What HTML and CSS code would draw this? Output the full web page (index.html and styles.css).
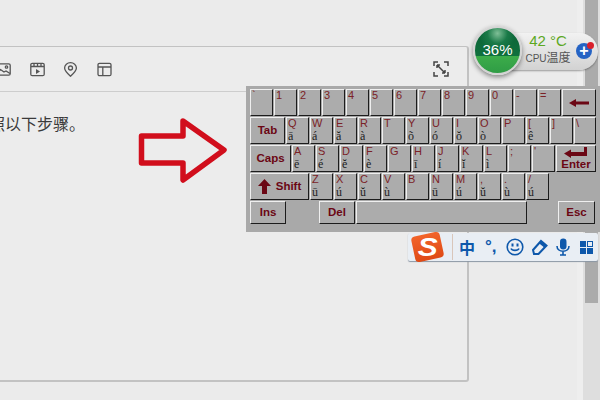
FILE: index.html
```html
<!DOCTYPE html>
<html>
<head>
    <title>Keyboard</title>
    <link rel="stylesheet" href="styles.css">
</head>
<body>
    <div class="main">
        <div class="card">
            <div class="toolbar">
                <div class="tools">
                    <svg class="icon" viewBox="0 0 15 15"><rect x="0.8" y="1.8" width="13.4" height="11.4" rx="1.5"/><circle cx="10.5" cy="5" r="1.2"/><path d="M1 10.5l3.5-3 3.5 2.5 2-1 4 2.5"/></svg>
                    <svg class="icon" viewBox="0 0 15 15"><rect x="0.8" y="1.3" width="13.4" height="12.4" rx="1.5"/><path d="M1 4.5h13M4 1.5v3M7.5 1.5v3M11 1.5v3"/><path class="solid" d="M6 7l4 2.5-4 2.5z"/></svg>
                    <svg class="icon" viewBox="0 0 15 15"><path d="M7.5 14.2C4 11 1.6 8.500 1.600 5.900a5.900 5.200 0 0 1 11.800 0c0 2.600-2.400 5.100-5.900 8.300z"/><circle cx="7.500" cy="6" r="2"/></svg>
                    <svg class="icon" viewBox="0 0 15 15"><rect x="1" y="1.300" width="13" height="12.400" rx="1.500"/><path d="M1 5h13M5.800 5v8.500"/></svg>
                </div>
                <svg class="icon expand" viewBox="0 0 16 16"><path d="M1 5V1h4M11 1h4v4M15 11v4h-4M5 15H1v-4"/><path d="M4 4l8 8M4 4h3M4 4v3M12 12H9M12 12V9"/></svg>
            </div>
            <p class="content">照以下步骤。</p>
        </div>
    </div>
    <div class="scrollbar"><div class="thumb"></div></div>

    <svg class="arrow" viewBox="0 0 100 72" width="100" height="72"><path d="M3.500 19H45V4l41 29-41 30V46H3.500z"/></svg>

    <div class="widget">
        <div class="gauge"><span>36%</span></div>
        <div class="pill">
            <div class="readout">
                <div class="temp">42 °C</div>
                <div class="label"><span class="cpu">CPU</span>温度</div>
            </div>
            <div class="plus">+<i class="dot"></i></div>
        </div>
    </div>

    <div class="keyboard">
        <div class="row">
            <div class="key">`</div><div class="key">1</div><div class="key">2</div><div class="key">3</div><div class="key">4</div><div class="key">5</div><div class="key">6</div><div class="key">7</div><div class="key">8</div><div class="key">9</div><div class="key">0</div><div class="key">-</div><div class="key">=</div>
            <div class="key fn back"><svg width="20" height="8" viewBox="0 0 20 8"><path d="M0 4l7-4v2.500h13v3H7V8z"/></svg></div>
        </div>
        <div class="row">
            <div class="key fn tab">Tab</div>
            <div class="key">Q<b>ā</b></div><div class="key">W<b>á</b></div><div class="key">E<b>ă</b></div><div class="key">R<b>à</b></div><div class="key">T</div><div class="key">Y<b>õ</b></div><div class="key">U<b>ó</b></div><div class="key">I<b>ŏ</b></div><div class="key">O<b>ò</b></div><div class="key">P</div><div class="key">[<b>ê</b></div><div class="key">]</div><div class="key last">\</div>
        </div>
        <div class="row">
            <div class="key fn caps">Caps</div>
            <div class="key">A<b>ē</b></div><div class="key">S<b>é</b></div><div class="key">D<b>ĕ</b></div><div class="key">F<b>è</b></div><div class="key">G</div><div class="key">H<b>ī</b></div><div class="key">J<b>í</b></div><div class="key">K<b>ĭ</b></div><div class="key">L<b>ì</b></div><div class="key">;</div><div class="key">'</div>
            <div class="key fn enter"><svg width="24" height="11" viewBox="0 0 24 11"><path d="M0 6.500l7-4V5h13V0h3v9H7v2z"/></svg>Enter</div>
        </div>
        <div class="row">
            <div class="key fn shift"><svg width="13" height="15" viewBox="0 0 13 15"><path d="M6.500 0L13 7H9v8H4V7H0z"/></svg>Shift</div>
            <div class="key">Z<b>ū</b></div><div class="key">X<b>ú</b></div><div class="key">C<b>ŭ</b></div><div class="key">V<b>ù</b></div><div class="key">B</div><div class="key">N<b>ū</b></div><div class="key">M<b>ú</b></div><div class="key">,<b>ŭ</b></div><div class="key">.<b>ù</b></div><div class="key">/<b>ú</b></div>
        </div>
        <div class="row bottom">
            <div class="key fn ins">Ins</div>
            <div class="key fn del">Del</div>
            <div class="key space"></div>
            <div class="key fn esc">Esc</div>
        </div>
    </div>

    <div class="imebar">
        <div class="logo"><span>S</span></div>
        <div class="sep"></div>
        <span class="zh">中</span>
        <span class="punct">°,</span>
        <svg class="ime" width="18" height="18" viewBox="0 0 18 18"><circle cx="9" cy="9" r="7.800"/><path d="M5 10.500c1 2.500 7 2.500 8 0"/><path class="fill" d="M5.500 5.500h2v3h-2zM10.500 5.500h2v3h-2z"/></svg>
        <svg class="ime pen" width="16" height="16" viewBox="0 0 16 16"><path d="M1 11l8-9 5.500 4.500-8 8.500H2z"/><path class="fill" d="M7 4.200L9 2l5.500 4.500-2 2.200z"/></svg>
        <svg class="ime mic" width="14" height="18" viewBox="0 0 14 18"><rect class="fill" x="4" y="0.500" width="6.500" height="11" rx="3.200"/><path d="M1 8c0 7 12 7 12 0M7 14v3M4 17h6"/></svg>
        <div class="grid"><i></i><i class="open"></i><i></i><i></i></div>
    </div>
</body>
</html>
```

FILE: styles.css
```css
html, body {
    height: 400px;
    overflow: hidden;
}

body {
    display: flex;
    margin: 0;
    position: relative;
    background: #ebebeb;
    font-family: "Liberation Sans", "Noto Sans CJK SC", sans-serif;
}

.main {
    flex: 1;
}

.card {
    box-sizing: border-box;
    width: 489px;
    height: 336px;
    margin: 46px 0 0 -20px;
    border: 1px solid #c2c2c2;
    border-width: 1px 2px 2px 1px;
    border-radius: 3px;
    background: #ececec;
}

.toolbar {
    display: flex;
    justify-content: space-between;
    align-items: center;
    height: 45px;
    padding: 0 18px 0 15px;
    box-sizing: border-box;
    border-bottom: 1px solid #cdcdcd;
}

.tools {
    display: flex;
    gap: 18.500px;
}

.icon {
    width: 15px;
    height: 15px;
    fill: none;
    stroke: #555;
    stroke-width: 1.3;
}

.icon .solid {
    fill: #555;
    stroke: none;
}

.expand {
    width: 16px;
    height: 16px;
    stroke: #444;
    stroke-width: 1.5;
}

.content {
    margin: 0;
    padding: 24px 8px 0;
    font-size: 16px;
    line-height: 18px;
    color: #3a3a3a;
}

.scrollbar {
    width: 17px;
    height: 400px;
    background: #dedede;
    box-shadow: -6px 0 0 #eeeeee;
}

.thumb {
    width: 13px;
    height: 303px;
    margin-left: 2px;
    background: #ababab;
}

/* red arrow pasted over the page */
.arrow {
    position: absolute;
    left: 138px;
    top: 117px;
}

.arrow path {
    fill: none;
    stroke: #d10e1c;
    stroke-width: 5.500;
    stroke-linejoin: round;
}

/* cpu widget */
.widget {
    position: absolute;
    left: 473px;
    top: 26px;
    display: flex;
    align-items: center;
}

.gauge {
    position: relative;
    z-index: 1;
    box-sizing: border-box;
    width: 49px;
    height: 49px;
    padding-bottom: 2px;
    border: 2px solid #d4d4d4;
    border-radius: 50%;
    display: flex;
    align-items: center;
    justify-content: center;
    background: radial-gradient(circle at 50% 12%, #7fbf97 0, #1a7a48 22%, transparent 40%),
        linear-gradient(#0c6236 0, #10703e 63%, #3cac4a 63%, #2f9c45 100%);
    box-shadow: 0 2px 5px rgba(0, 0, 0, 0.45);
    color: #fff;
    font-size: 15px;
}

.pill {
    box-sizing: border-box;
    display: flex;
    align-items: center;
    width: 101px;
    height: 37px;
    margin: 1px 0 0 -25px;
    padding-left: 25px;
    border-radius: 0 19px 19px 0;
    background: linear-gradient(#f2f2f2, #d2d2d2);
    box-shadow: 0 1px 2px rgba(0, 0, 0, 0.35);
}

.readout {
    width: 52px;
    margin-top: -3px;
    text-align: center;
}

.temp {
    font-size: 15px;
    line-height: 18px;
    color: #5ca81f;
}

.label {
    font-size: 12px;
    line-height: 17px;
    color: #555;
    white-space: nowrap;
}

.cpu {
    font-size: 10px;
}

.plus {
    position: relative;
    width: 16px;
    height: 16px;
    margin-left: 2px;
    border-radius: 50%;
    background: #2563c4;
    color: #fff;
    font-size: 16px;
    font-weight: bold;
    line-height: 16px;
    text-align: center;
}

.dot {
    position: absolute;
    right: -2px;
    top: -1px;
    width: 7px;
    height: 7px;
    border-radius: 50%;
    background: #d8202c;
}

/* on-screen keyboard */
.keyboard {
    position: absolute;
    left: 246px;
    top: 86px;
    width: 350px;
    height: 135px;
    padding: 3px 0 8px 4px;
    display: flex;
    flex-direction: column;
    gap: 1px;
    background: #a9a9a9;
    box-shadow: 4px 0 0 #a9a9a9;
}

.row {
    display: flex;
    gap: 1px;
    height: 27px;
}

.row.bottom {
    height: 23px;
}

.key {
    box-sizing: border-box;
    flex: none;
    width: 23px;
    padding: 0 0 0 1px;
    border: 1px solid #efefef;
    border-right-color: #1c1c1c;
    border-bottom-color: #1c1c1c;
    background: #acacac;
    color: #7b2226;
    font-size: 11px;
    line-height: 11px;
}

.key b {
    display: block;
    margin-top: 1px;
    font-family: "Liberation Serif", serif;
    font-weight: normal;
    font-size: 12px;
    line-height: 13px;
    color: #222;
}

.key.last {
    width: 22px;
}

.fn {
    display: flex;
    align-items: center;
    justify-content: center;
    gap: 5px;
    padding: 0;
    color: #6b0714;
    font-size: 11.500px;
    font-weight: bold;
}

.fn svg {
    fill: #6b0714;
}

.back {
    width: 34px;
}

.tab {
    width: 35px;
}

.caps {
    width: 41px;
}

.enter {
    width: 40px;
    flex-direction: column;
    gap: 1px;
}

.shift {
    width: 59px;
}

.ins {
    width: 36px;
}

.del {
    width: 36px;
    margin-left: 32px;
}

.space {
    width: 171px;
}

.esc {
    width: 37px;
    margin-left: 30px;
}

/* ime status bar */
.imebar {
    position: absolute;
    left: 408px;
    top: 233px;
    box-sizing: border-box;
    display: flex;
    align-items: center;
    width: 190px;
    height: 28px;
    padding-left: 5px;
    border-radius: 2px;
    background: #e9eef4;
    box-shadow: 0 1px 1px #8b97a5;
}

.logo {
    flex: none;
    width: 29px;
    height: 26px;
    border-radius: 4px;
    display: flex;
    align-items: center;
    justify-content: center;
    background: linear-gradient(#f2642a, #df4a16);
    transform: rotate(-12deg);
}

.logo span {
    color: #fff;
    font-size: 26px;
    font-weight: bold;
    font-style: italic;
    line-height: 26px;
    transform: rotate(12deg) scaleX(1.150);
}

.sep {
    flex: none;
    width: 1px;
    height: 26px;
    margin: 0 6px 0 10px;
    background: #d9c6ba;
}

.zh {
    width: 16px;
    font-size: 16px;
    font-weight: bold;
    color: #0e58ab;
}

.punct {
    width: 16px;
    margin-left: 10px;
    font-size: 17px;
    font-weight: bold;
    line-height: 18px;
    color: #0e58ab;
}

.ime {
    fill: none;
    stroke: #0e58ab;
    stroke-width: 1.600;
    flex: none;
}

.ime .fill {
    fill: #0e58ab;
    stroke: none;
}

.punct + .ime {
    margin-left: 5px;
}

.ime + .ime {
    margin-left: 8px;
}

.ime.pen {
    stroke-width: 2;
}

.grid {
    display: grid;
    grid-template-columns: 6px 6px;
    grid-auto-rows: 6px;
    gap: 1px;
    margin-left: 10px;
}

.grid i {
    background: #0e58ab;
}

.grid .open {
    box-sizing: border-box;
    background: none;
    border: 1px solid #0e58ab;
}
```
